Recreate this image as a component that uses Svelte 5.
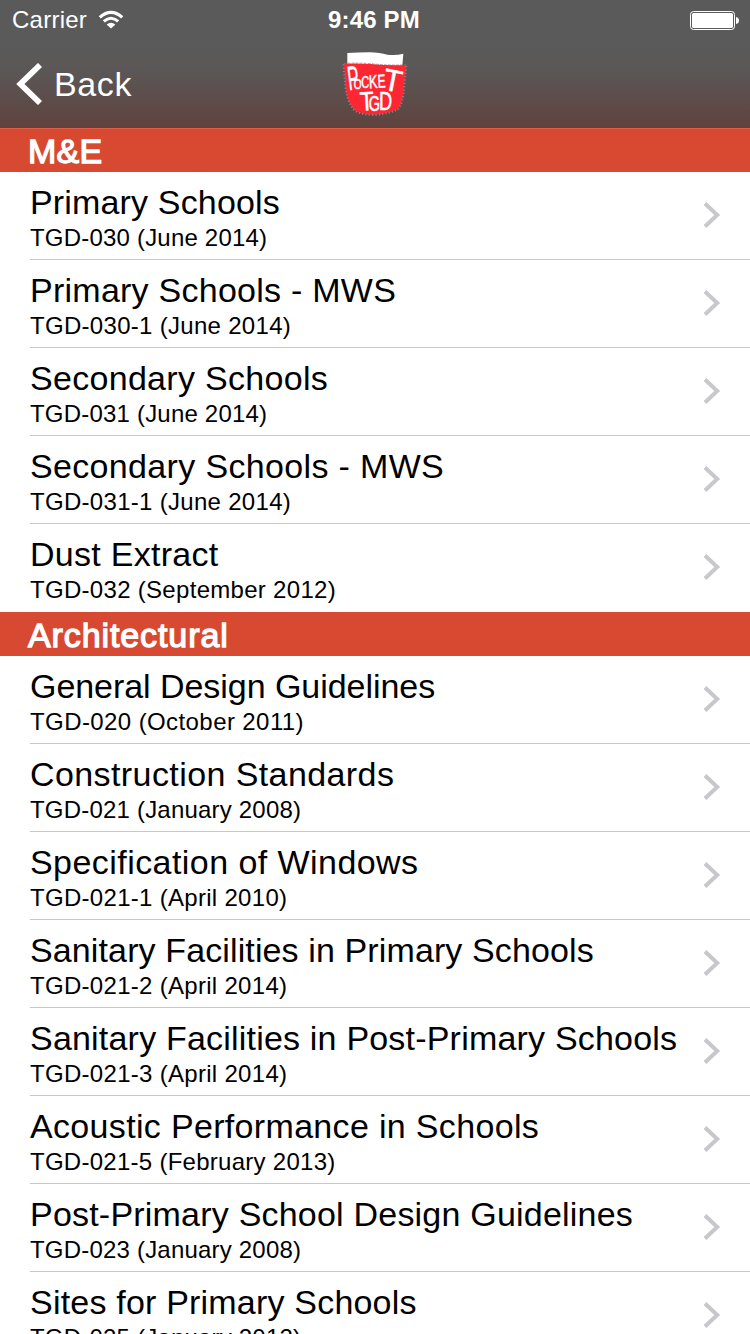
<script>
  const sections = [
    {
      title: 'M&E',
      spacing: 0.2,
      rows: [
        { name: 'Primary Schools', detail: 'TGD-030 (June 2014)', ls: 0.16, ds: 0.2 },
        { name: 'Primary Schools - MWS', detail: 'TGD-030-1 (June 2014)', ls: 0.25, ds: 0.3 },
        { name: 'Secondary Schools', detail: 'TGD-031 (June 2014)', ls: 0.3, ds: 0.2 },
        { name: 'Secondary Schools - MWS', detail: 'TGD-031-1 (June 2014)', ls: 0.34, ds: 0.3 },
        { name: 'Dust Extract', detail: 'TGD-032 (September 2012)', ls: 0.27, ds: 0.3 }
      ]
    },
    {
      title: 'Architectural',
      spacing: 0.9,
      rows: [
        { name: 'General Design Guidelines', detail: 'TGD-020 (October 2011)', ls: -0.05, ds: 0.41 },
        { name: 'Construction Standards', detail: 'TGD-021 (January 2008)', ls: 0.41, ds: 0.2 },
        { name: 'Specification of Windows', detail: 'TGD-021-1 (April 2010)', ls: 0.44, ds: 0.3 },
        { name: 'Sanitary Facilities in Primary Schools', detail: 'TGD-021-2 (April 2014)', ls: 0.12, ds: 0.3 },
        { name: 'Sanitary Facilities in Post-Primary Schools', detail: 'TGD-021-3 (April 2014)', ls: 0.2, ds: 0.3 },
        { name: 'Acoustic Performance in Schools', detail: 'TGD-021-5 (February 2013)', ls: 0.33, ds: 0.27 },
        { name: 'Post-Primary School Design Guidelines', detail: 'TGD-023 (January 2008)', ls: 0.21, ds: 0.2 },
        { name: 'Sites for Primary Schools', detail: 'TGD-025 (January 2012)', ls: 0.2, ds: 0.2 }
      ]
    }
  ];
</script>

<div class="screen">
  <header>
    <div class="status">
      <div class="carrier">
        <span>Carrier</span>
        <svg width="26" height="20" viewBox="0 0 26 20" fill="none" stroke="#fff">
          <path d="M1.8 7.4 Q13 -2.6 24.2 7.4" stroke-width="3.2" />
          <path d="M5.8 11.4 Q13 5 20.2 11.4" stroke-width="3" />
          <path d="M8.6 14.6 Q13 11 17.4 14.6 L13 18.6Z" fill="#fff" stroke="none" />
        </svg>
      </div>
      <div class="time">9:46 PM</div>
      <div class="battery">
        <svg width="49" height="19" viewBox="0 0 49 19">
          <rect x=".5" y=".5" width="44" height="18" rx="3" fill="none" stroke="#fff" />
          <rect x="2" y="2" width="41" height="15" rx="1.6" fill="#fff" />
          <path d="M46 6 Q49 6.5 49 9.5 Q49 12.5 46 13Z" fill="#fff" />
        </svg>
      </div>
    </div>
    <nav>
      <div class="back">
        <svg width="26" height="42" viewBox="0 0 26 42">
          <path d="M24 2 L4.4 21 L24 40" fill="none" stroke="#fff" stroke-width="5.8" />
        </svg>
        <span>Back</span>
      </div>
      <svg class="logo" width="80" height="80" viewBox="0 0 240 240">
        <path d="M37 24 Q70 23 103 22 Q135 23 157 29 Q183 32 205 26 L202 62 L37 61Z" fill="#fff" />
        <path d="M27 56 Q65 54 108 57 Q165 63 214 60 L207 123 Q205 174 189 192 Q155 208 114 209 Q67 209 53 190 Q34 163 31 121Z" fill="#fd2632" />
        <path d="M25 58 L31 121 Q34 163 53 190 Q67 209 114 210 Q155 209 189 193 Q205 174 208 123 L214 62" fill="none" stroke="#8c8989" stroke-width="6" stroke-dasharray="3 7" />
        <path d="M27 55 Q65 53 108 56 Q165 62 214 59" fill="none" stroke="#a66a68" stroke-width="2" stroke-dasharray="8 4" />
        <g class="letters">
          <text font-size="101" transform="translate(42 136) rotate(-7) scale(.5 1)">P</text>
          <text font-size="46" transform="translate(56 131) scale(.66 1)">O</text>
          <text font-size="50" transform="translate(79 130) scale(.66 1)">C</text>
          <text font-size="56" transform="translate(103 130) rotate(-3) scale(.68 1)">K</text>
          <text font-size="56" transform="translate(129 128) rotate(-3) scale(.62 1)">E</text>
          <text font-size="92" transform="translate(140 133) rotate(11) scale(.98 1)">T</text>
          <text font-size="80" transform="translate(76 197) rotate(-3) scale(.86 1)">T</text>
          <text font-size="64" transform="translate(101 198) scale(.68 1)">G</text>
          <text font-size="76" transform="translate(132 196) scale(.72 1)">D</text>
        </g>
      </svg>
    </nav>
  </header>

  {#each sections as section}
    <h2 style:letter-spacing="{section.spacing}px">{section.title}</h2>
    <ul>
      {#each section.rows as row}
        <li>
          <div class="text">
            <div class="name" style:letter-spacing="{row.ls}px">{row.name}</div>
            <div class="detail" style:letter-spacing="{row.ds}px">{row.detail}</div>
          </div>
          <svg class="chevron" width="18" height="28" viewBox="0 0 18 28">
            <path d="M2 2.5 L14.2 14 L2 25.5" fill="none" stroke="#c7c7cc" stroke-width="4" />
          </svg>
        </li>
      {/each}
    </ul>
  {/each}
</div>

<style>
  :global(body) {
    margin: 0;
    overflow: hidden;
  }
  .screen {
    width: 750px;
    height: 1334px;
    overflow: hidden;
    background: #fff;
    color: #000;
    font-family: "Liberation Sans", Arial, sans-serif;
  }
  header {
    height: 128px;
    color: #fff;
    background: linear-gradient(#5a5a5a 0, #5a5a5a 45px, #5b5655 75px, #5d4c49 102px, #60423d 128px);
  }
  .status {
    display: grid;
    grid-template-columns: 1fr auto 1fr;
    align-items: center;
    height: 40px;
    padding: 0 11px 0 12px;
    font-size: 24px;
    line-height: 40px;
  }
  .carrier {
    display: flex;
    align-items: center;
    gap: 11px;
    letter-spacing: 0.25px;
  }
  .time {
    padding-right: 3px;
    font-weight: bold;
    letter-spacing: 0.15px;
  }
  .battery {
    display: flex;
    justify-content: flex-end;
  }
  nav {
    display: grid;
    grid-template-columns: 1fr 80px 1fr;
    align-items: center;
    height: 88px;
  }
  .back {
    display: flex;
    align-items: center;
    gap: 12px;
    padding-left: 16px;
    font-size: 34px;
    letter-spacing: 0.6px;
  }
  .logo {
    margin-top: 2px;
  }
  .letters {
    fill: #fff;
    stroke: #fff;
    stroke-width: 1.6;
  }
  h2 {
    box-sizing: border-box;
    height: 44px;
    margin: 0;
    padding: 2px 28px 0;
    background: #d84932;
    color: #fff;
    font-size: 34px;
    line-height: 42px;
    font-weight: normal;
    -webkit-text-stroke: 1.3px #fff;
  }
  header + h2 {
    border-top: 1px solid #e05d46;
    padding-top: 1px;
  }
  ul {
    margin: 0;
    padding: 0;
    list-style: none;
  }
  li {
    display: flex;
    align-items: center;
    justify-content: space-between;
    box-sizing: border-box;
    height: 88px;
    margin-left: 30px;
    padding-right: 29px;
    border-bottom: 1px solid #c8c7cc;
    white-space: nowrap;
  }
  li:last-child {
    border-bottom-color: transparent;
  }
  .name {
    height: 42px;
    margin-top: 3px;
    font-size: 34px;
    line-height: 40px;
  }
  .detail {
    height: 28px;
    font-size: 24px;
    line-height: 28px;
  }
  .chevron {
    margin-bottom: 2px;
  }
</style>
